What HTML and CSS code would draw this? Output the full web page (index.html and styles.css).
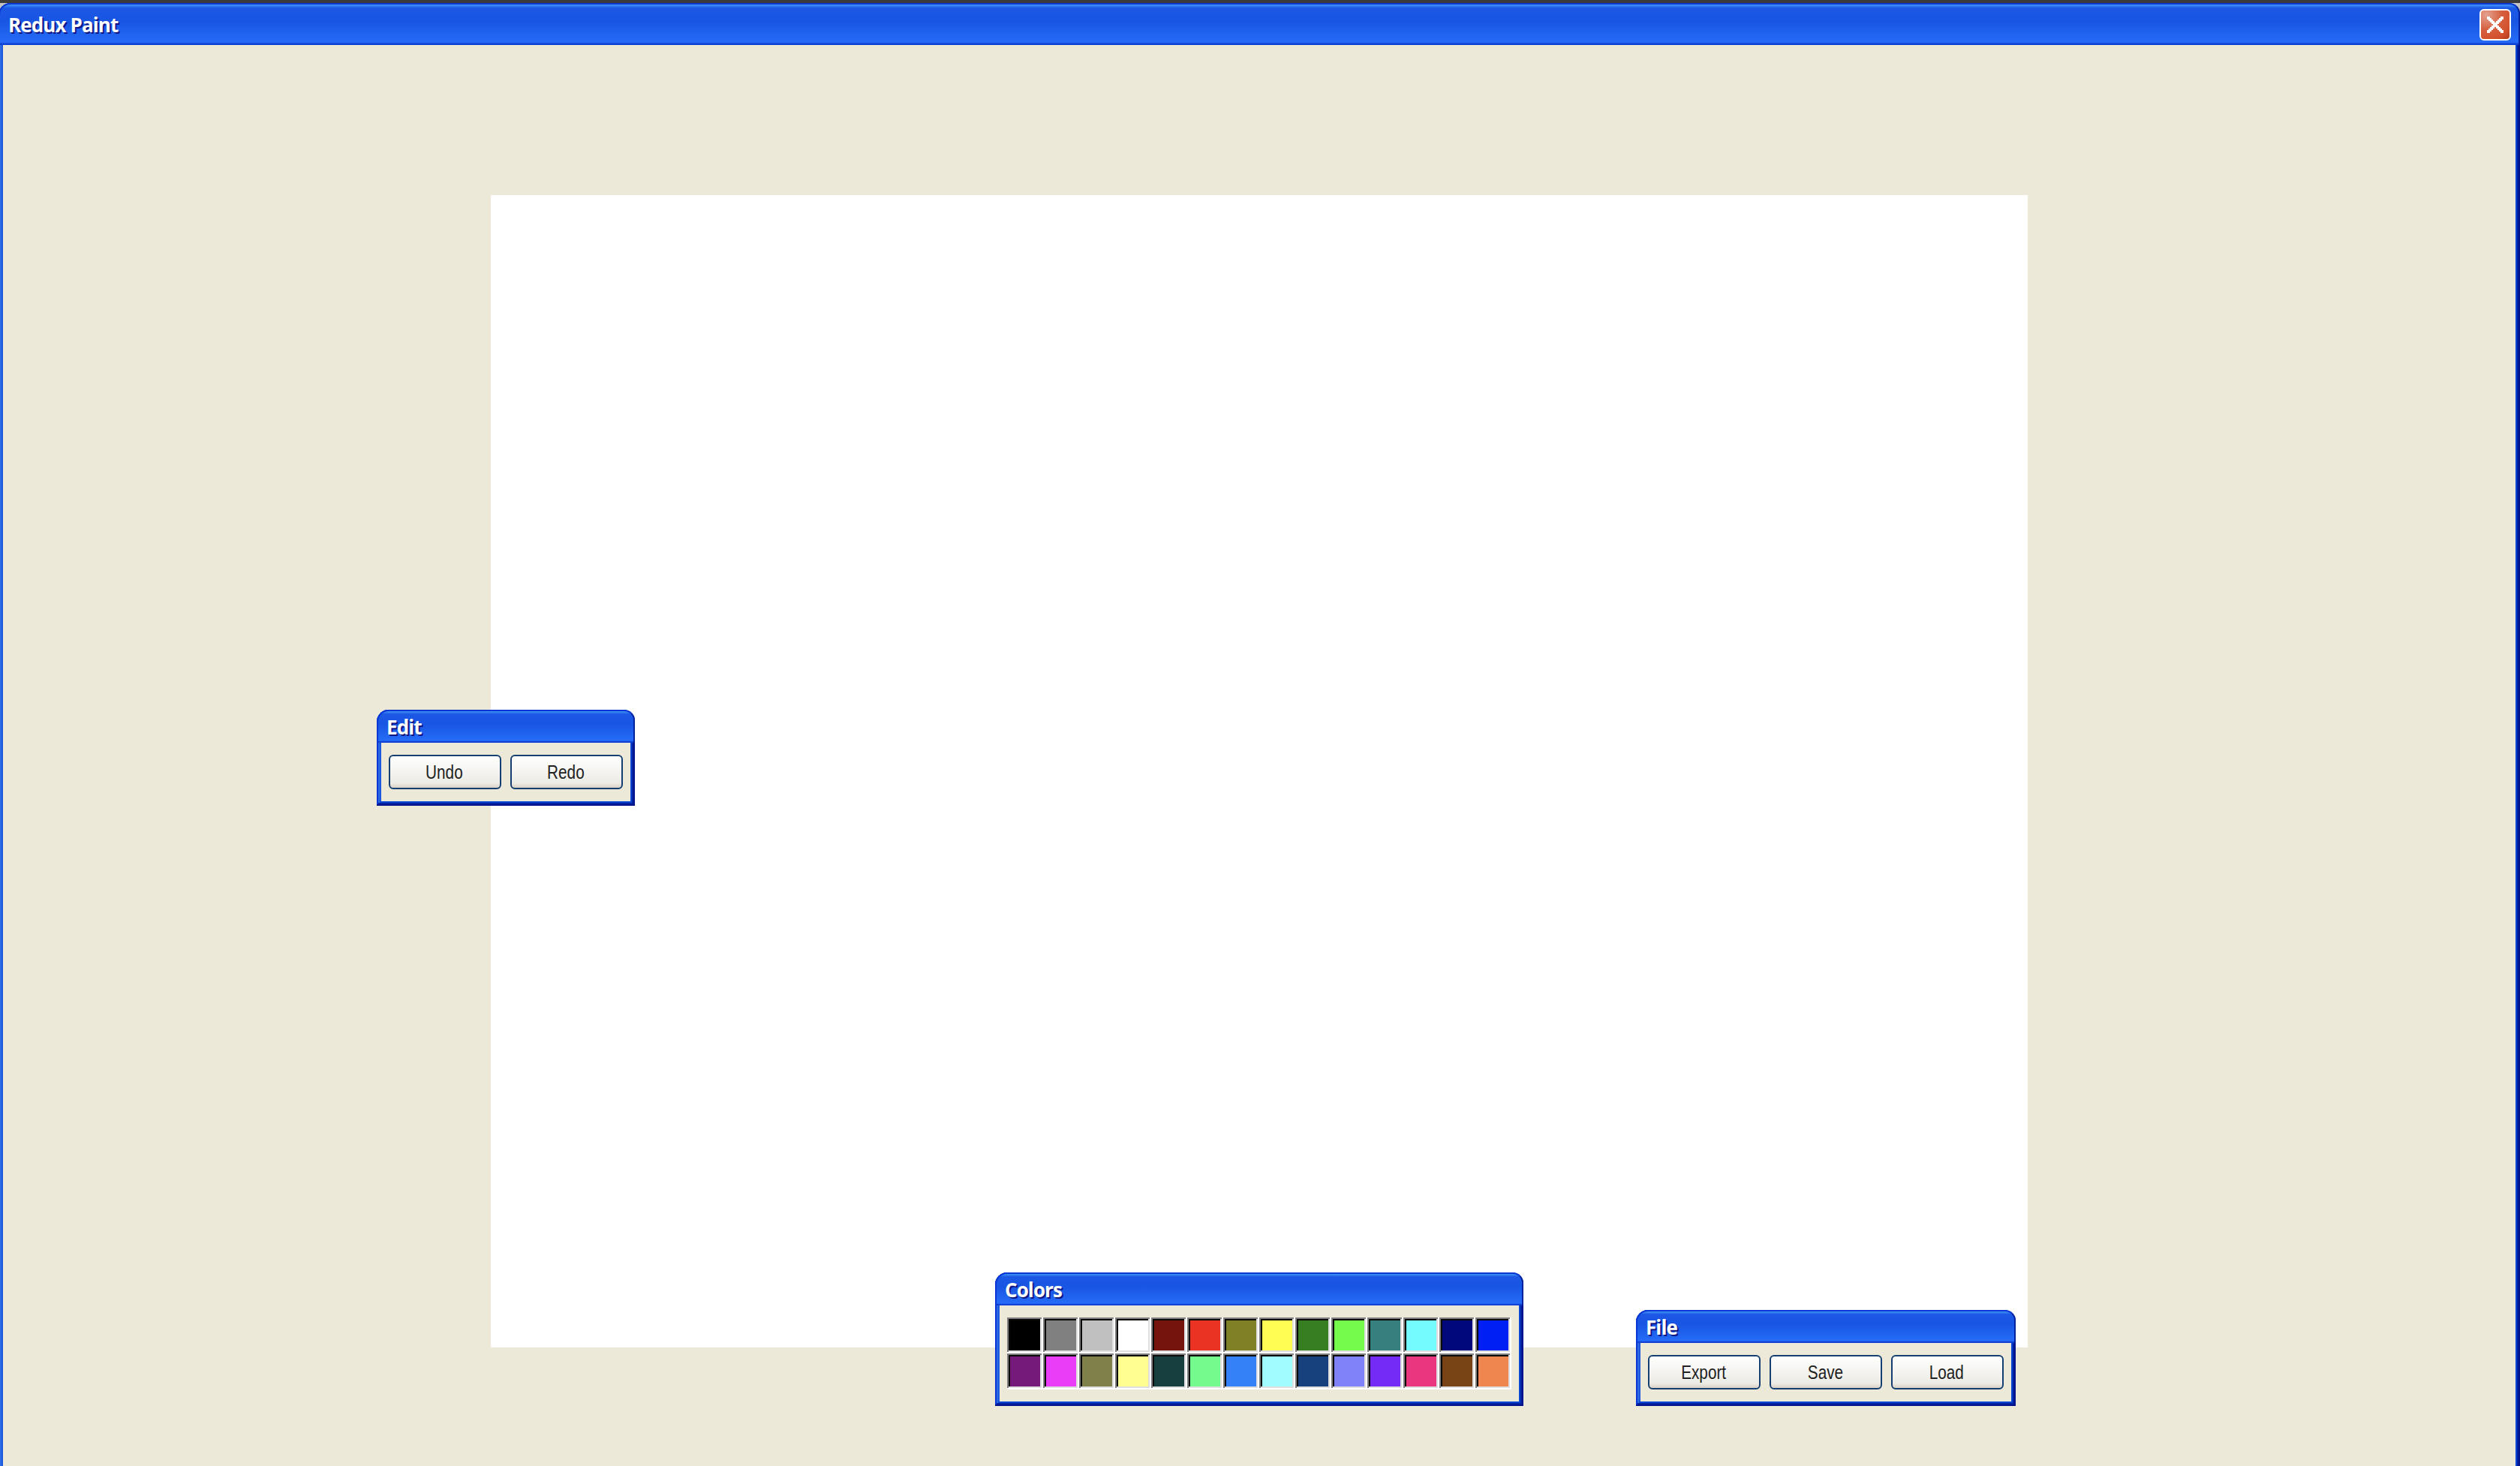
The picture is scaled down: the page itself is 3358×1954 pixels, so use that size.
FILE: index.html
```html
<!DOCTYPE html>
<html lang="en">
<head>
  <meta charset="UTF-8">
  <title>Redux Paint</title>
  <link rel="stylesheet" href="styles.css">
</head>
<body>
  <div class="window main-window">
    <div class="title-bar">
      <div class="title-bar-text">Redux Paint</div>
      <button class="close" aria-label="Close">
        <svg viewBox="0 0 42 42" shape-rendering="crispEdges">
          <path fill="#fff" d="M10 10h4v2h2v2h2v2h2v2h2v-2h2v-2h2v-2h2v-2h4v4h-2v2h-2v2h-2v2h-2v2h2v2h2v2h2v2h2v4h-4v-2h-2v-2h-2v-2h-2v-2h-2v2h-2v2h-2v2h-2v2h-4v-4h2v-2h2v-2h2v-2h2v-2h-2v-2h-2v-2h-2v-2h-2z"/>
        </svg>
      </button>
    </div>
    <div class="window-body">
      <canvas width="2048" height="1536"></canvas>
    </div>
  </div>

  <div class="window edit">
    <div class="title-bar"><div class="title-bar-text">Edit</div></div>
    <div class="window-body">
      <div class="field-row">
        <button class="button"><span>Undo</span></button>
        <button class="button"><span>Redo</span></button>
      </div>
    </div>
  </div>

  <div class="window colors-panel">
    <div class="title-bar"><div class="title-bar-text">Colors</div></div>
    <div class="window-body">
      <div class="colors" id="colors"></div>
    </div>
  </div>

  <div class="window file">
    <div class="title-bar"><div class="title-bar-text">File</div></div>
    <div class="window-body">
      <div class="field-row">
        <button class="button"><span>Export</span></button>
        <button class="button"><span>Save</span></button>
        <button class="button"><span>Load</span></button>
      </div>
    </div>
  </div>

  <script>
    const COLORS = [
      "#000000", "#808080", "#c0c0c0", "#ffffff", "#75140c", "#ea3323", "#808026",
      "#fffd54", "#377d22", "#75fb4c", "#377e7f", "#73fbfd", "#00087b", "#001ff5",
      "#75197b", "#ea3df7", "#80804a", "#fffe91", "#183f3f", "#75fa8d", "#3380f7",
      "#a0fcfe", "#16417c", "#7f82f8", "#732bf5", "#ea357f", "#784315", "#ef8650"
    ];
    const panel = document.getElementById("colors");
    COLORS.forEach(color => {
      const el = document.createElement("div");
      el.className = "color";
      el.style.backgroundColor = color;
      panel.appendChild(el);
    });
  </script>
</body>
</html>
```

FILE: styles.css
```css
* {
  box-sizing: border-box;
}
body {
  margin: 0;
  padding-top: 4px;
  height: 1954px;
  overflow: hidden;
  background: linear-gradient(#3b3b3b 4px, #c3c3c3 4px);
  font-family: "Liberation Sans", Arial, sans-serif;
}
.window {
  display: flex;
  flex-direction: column;
  padding: 0 6px 6px;
  background: #ece9d8;
  border-radius: 16px 16px 0 0;
  box-shadow:
    inset -2px -2px #00138c,
    inset 2px 2px #0a37d4,
    inset -4px -4px #00229e,
    inset 4px 4px #2d6be4,
    inset -6px -6px #0a45d4,
    inset 6px 6px #1f57da;
}
.title-bar {
  display: flex;
  align-items: center;
  justify-content: space-between;
  height: 44px;
  margin: 0 -6px;
  padding: 0 12px 0 11px;
  border: 2px solid #0a37d4;
  border-right-color: #00229e;
  border-bottom: 0;
  border-radius: 16px 14px 0 0;
  background: linear-gradient(#4096f8, #1c58e4 9%, #1855e2 40%, #246af6 88%, #246af6 93%, #205ff0 95%, #0f42d2 96%, #0f42d2);
}
.title-bar-text {
  padding-bottom: 1px;
  font-family: "Open Sans", sans-serif;
  font-size: 26px;
  font-weight: 700;
  letter-spacing: -0.9px;
  color: #fff;
  text-shadow: 2px 2px #0f1684;
}
.window-body {
  padding: 16px 10px;
}
.main-window {
  width: 3360px;
  height: 1960px;
  margin-left: -2px;
}
.main-window .title-bar {
  height: 56px;
  padding-right: 10px;
}
.main-window .window-body {
  padding: 200px 0 0;
}
canvas {
  display: block;
  margin: 0 auto;
  background: #fff;
}
.close {
  width: 42px;
  height: 42px;
  padding: 0;
  border: 2px solid #fff;
  border-radius: 6px;
  background: radial-gradient(circle at 20% 15%, #e5a18f, #d5603f 45%, #d4512d 75%, #b03a1b);
}
.close svg {
  display: block;
  width: 42px;
  height: 42px;
  margin: -2px;
}
.edit {
  position: absolute;
  left: 502px;
  top: 946px;
}
.colors-panel {
  position: absolute;
  left: 1326px;
  top: 1696px;
}
.file {
  position: absolute;
  left: 2180px;
  top: 1746px;
}
.field-row {
  display: flex;
  gap: 12px;
}
.button {
  width: 150px;
  height: 46px;
  padding: 0 2px 0 0;
  border: 2px solid #153f72;
  border-radius: 6px;
  background: linear-gradient(#fff, #ecebe5 86%, #d8d0c4);
  color: #222;
  font-family: "Liberation Sans", Arial, sans-serif;
  font-size: 25px;
}
.button span {
  display: inline-block;
  transform: scaleX(0.83);
}
.colors {
  display: grid;
  grid-template-columns: repeat(14, 48px);
}
.color {
  height: 48px;
  box-shadow:
    inset -2px -2px #fff,
    inset 2px 2px #808080,
    inset -4px -4px #dfdfdf,
    inset 4px 4px #0a0a0a;
}
```
